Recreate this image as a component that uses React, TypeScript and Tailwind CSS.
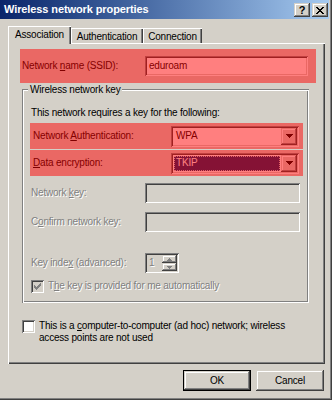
import React from "react";

const RAISED =
  "shadow-[inset_-1px_-1px_#404040,inset_1px_1px_#d4d0c8,inset_-2px_-2px_#808080,inset_2px_2px_#ffffff]";
const SUNKEN =
  "shadow-[inset_1px_1px_#808080,inset_-1px_-1px_#ffffff,inset_2px_2px_#404040,inset_-2px_-2px_#d4d0c8]";
const DIS = "text-[#808080] [text-shadow:1px_1px_0_#ffffff]";

function Red() {
  return <div className="absolute inset-0 bg-[#ff0000]/50 pointer-events-none" />;
}

function Arrow({ color = "#000000" }: { color?: string }) {
  return (
    <svg width="7" height="4" viewBox="0 0 7 4" shapeRendering="crispEdges">
      <path d="M0 0h7v1h-1v1h-1v1h-1v1h-1v-1h-1v-1h-1v-1h-1z" fill={color} />
    </svg>
  );
}

function Combo({ text, selected }: { text: string; selected?: boolean }) {
  return (
    <div className={`w-[128px] h-[21px] bg-white flex p-[2px] ${SUNKEN}`}>
      <div className="flex-1 flex items-center p-[1px]">
        {selected ? (
          <div className="h-full w-full flex items-center pl-[1px] bg-[#0a246a] text-white border border-dotted border-[#c8c8c8]">
            {text}
          </div>
        ) : (
          <div className="h-full w-full flex items-center pl-[2px]">{text}</div>
        )}
      </div>
      <div className={`w-[16px] h-full bg-[#d4d0c8] flex items-center justify-center ${RAISED}`}>
        <Arrow />
      </div>
    </div>
  );
}

function Check({ checked, disabled }: { checked?: boolean; disabled?: boolean }) {
  return (
    <div
      className={`w-[13px] h-[13px] shrink-0 flex items-center justify-center ${
        disabled ? "bg-[#d4d0c8]" : "bg-white"
      } ${SUNKEN}`}
    >
      {checked && (
        <svg width="7" height="7" viewBox="0 0 7 7" shapeRendering="crispEdges">
          <path
            d="M0 2h1v1h1v1h1v-1h1v-1h1v-1h1v-1h1v3h-1v1h-1v1h-1v1h-1v1h-1v-1h-1v-1h-1z"
            fill={disabled ? "#808080" : "#000000"}
          />
        </svg>
      )}
    </div>
  );
}

export default function App() {
  return (
    <div className="w-[332px] h-[400px] border-r border-b border-[#404040] font-['Liberation_Sans',Arial,sans-serif] text-[10px] leading-[12px] tracking-[-0.2px] text-black">
      <div className="w-full h-full border-r border-b border-[#808080] bg-[#d4d0c8] flex flex-col">
        {/* Title bar */}
        <div className="h-[19px] mr-[1px] bg-gradient-to-r from-[#0a246a] to-[#a6caf0] flex items-start justify-between">
          <div className="pl-[4px] pt-[3px] text-white font-bold text-[11px] leading-[13px] tracking-[-0.1px]">
            Wireless network properties
          </div>
          <div className="flex gap-[2px] mt-[3px] mr-[1px]">
            <div
              className={`w-[16px] h-[14px] bg-[#d4d0c8] flex items-center justify-center font-bold text-[11px] leading-[11px] ${RAISED}`}
            >
              ?
            </div>
            <div className={`w-[16px] h-[14px] bg-[#d4d0c8] flex items-center justify-center ${RAISED}`}>
              <svg width="8" height="7" viewBox="0 0 8 7" shapeRendering="crispEdges">
                <path
                  d="M0 0h2v1h1v1h2v-1h1v-1h2v1h-1v1h-1v1h-1v1h1v1h1v1h1v1h-2v-1h-1v-1h-2v1h-1v1h-2v-1h1v-1h1v-1h1v-1h-1v-1h-1v-1h-1z"
                  fill="#000000"
                />
              </svg>
            </div>
          </div>
        </div>

        {/* Tabs */}
        <div className="flex items-end h-[17px] ml-[8px] mt-[7px] relative z-10">
          <div className="h-[18px] w-[63px] -mb-px bg-[#d4d0c8] shadow-[inset_1px_1px_#ffffff,inset_-1px_0_#404040,inset_-2px_0_#808080] flex justify-center pt-[3px]">
            Association
          </div>
          <div className="h-[15px] w-[72px] shadow-[inset_1px_1px_#ffffff,inset_-1px_0_#404040,inset_-2px_0_#808080] flex justify-center pt-[3px]">
            Authentication
          </div>
          <div className="h-[15px] w-[59px] shadow-[inset_1px_1px_#ffffff,inset_-1px_0_#404040,inset_-2px_0_#808080] flex justify-center pt-[3px]">
            Connection
          </div>
        </div>

        {/* Panel */}
        <div className="ml-[8px] w-[317px] h-[321px] bg-[#d4d0c8] shadow-[inset_1px_1px_#ffffff,inset_-1px_-1px_#404040,inset_-2px_-2px_#808080] flex flex-col">
          {/* SSID */}
          <div className="relative ml-[12px] mt-[6px] w-[296px] h-[34px] flex items-center">
            <div className="w-[125px] pl-[2px]">
              Network <u className="underline underline-offset-[1px]">n</u>ame (SSID):
            </div>
            <div className={`w-[163px] h-[20px] bg-white flex items-center pl-[4px] ${SUNKEN}`}>eduroam</div>
            <Red />
          </div>

          {/* Group box */}
          <div className="relative ml-[14px] mt-[6px] w-[287px] h-[214px] shadow-[inset_1px_1px_#808080,inset_-1px_-1px_#ffffff,inset_2px_2px_#ffffff,inset_-2px_-2px_#808080] flex flex-col">
            <div className="absolute left-[6px] top-[-5px] px-[2px] bg-[#d4d0c8]">Wireless network key</div>
            <div className="ml-[9px] mt-[18px]">This network requires a key for the following:</div>

            <div className="relative ml-[8px] mt-[4px] w-[273px] h-[26px] flex items-center">
              <div className="w-[141px] pl-[3px]">
                Network <u className="underline underline-offset-[1px]">A</u>uthentication:
              </div>
              <Combo text="WPA" />
              <Red />
            </div>
            <div className="relative ml-[8px] mt-[1px] w-[273px] h-[26px] flex items-center">
              <div className="w-[141px] pl-[3px]">
                <u className="underline underline-offset-[1px]">D</u>ata encryption:
              </div>
              <Combo text="TKIP" selected />
              <Red />
            </div>

            <div className="ml-[9px] mt-[7px] h-[20px] flex items-center">
              <div className={`w-[114px] ${DIS}`}>
                Network <u className="underline underline-offset-[1px]">k</u>ey:
              </div>
              <div className={`w-[155px] h-[20px] bg-[#d4d0c8] ${SUNKEN}`} />
            </div>
            <div className="ml-[9px] mt-[9px] h-[20px] flex items-center">
              <div className={`w-[114px] ${DIS}`}>
                C<u className="underline underline-offset-[1px]">o</u>nfirm network key:
              </div>
              <div className={`w-[155px] h-[20px] bg-[#d4d0c8] ${SUNKEN}`} />
            </div>

            <div className="ml-[9px] mt-[21px] h-[20px] flex items-center">
              <div className={`w-[114px] ${DIS}`}>
                Key inde<u className="underline underline-offset-[1px]">x</u> (advanced):
              </div>
              <div className={`w-[34px] h-[20px] bg-[#d4d0c8] flex p-[2px] ${SUNKEN}`}>
                <div className={`flex-1 flex items-center pl-[2px] ${DIS}`}>1</div>
                <div className="w-[15px] flex flex-col">
                  <div className={`h-[8px] flex items-center justify-center bg-[#d4d0c8] ${RAISED}`}>
                    <svg width="5" height="3" viewBox="0 0 5 3" shapeRendering="crispEdges">
                      <path d="M2 0h1v1h1v1h1v1h-5v-1h1v-1h1z" fill="#808080" />
                    </svg>
                  </div>
                  <div className={`h-[8px] flex items-center justify-center bg-[#d4d0c8] ${RAISED}`}>
                    <svg width="5" height="3" viewBox="0 0 5 3" shapeRendering="crispEdges">
                      <path d="M0 0h5v1h-1v1h-1v1h-1v-1h-1v-1h-1z" fill="#808080" />
                    </svg>
                  </div>
                </div>
              </div>
            </div>

            <div className="ml-[9px] mt-[7px] flex items-start gap-[4px]">
              <Check checked disabled />
              <div className={DIS}>
                T<u className="underline underline-offset-[1px]">h</u>e key is provided for me automatically
              </div>
            </div>
          </div>

          {/* Ad hoc */}
          <div className="ml-[14px] mt-[17px] flex items-start gap-[4px]">
            <Check />
            <div>
              This is a <u className="underline underline-offset-[1px]">c</u>omputer-to-computer (ad hoc) network; wireless
              <br />
              access points are not used
            </div>
          </div>
        </div>

        {/* Buttons */}
        <div className="ml-[183px] mt-[6px] flex gap-[5px]">
          <div className="w-[68px] h-[21px] border border-black">
            <div className={`w-full h-full flex items-center justify-center ${RAISED}`}>OK</div>
          </div>
          <div className={`w-[68px] h-[21px] flex items-center justify-center ${RAISED}`}>Cancel</div>
        </div>
      </div>
    </div>
  );
}
